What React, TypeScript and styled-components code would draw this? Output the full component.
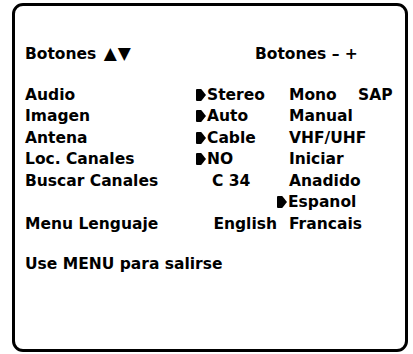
import React from 'react';
import styled, { createGlobalStyle } from 'styled-components';

// one line of the menu: label, then up to 3 value cells
interface Cell {
  text: string;
  selected?: boolean;
  indent?: number;
  alignEnd?: boolean;
}

interface MenuRow {
  label: string;
  cells: (Cell | null)[];
}

const ROWS: MenuRow[] = [
  {
    label: 'Audio',
    cells: [{ text: 'Stereo', selected: true }, { text: 'Mono' }, { text: 'SAP' }],
  },
  { label: 'Imagen', cells: [{ text: 'Auto', selected: true }, { text: 'Manual' }] },
  { label: 'Antena', cells: [{ text: 'Cable', selected: true }, { text: 'VHF/UHF' }] },
  { label: 'Loc. Canales', cells: [{ text: 'NO', selected: true }, { text: 'Iniciar' }] },
  { label: 'Buscar Canales', cells: [{ text: 'C 34', indent: 16 }, { text: 'Anadido' }] },
  { label: '', cells: [null, { text: 'Espanol', selected: true }] },
  {
    label: 'Menu Lenguaje',
    cells: [{ text: 'English', alignEnd: true }, { text: 'Francais' }],
  },
];

const GlobalStyle = createGlobalStyle`
  html, body {
    margin: 0;
    padding: 0;
    background: #fff;
  }
`;

const Marker = () => (
  <MarkerSvg viewBox="0 0 10 12" width="10" height="12">
    <path d="M0 1 Q0 0 1 0 H5.2 L10 6 L5.2 12 H1 Q0 12 0 11 Z" fill="#000" />
  </MarkerSvg>
);

const App = () => {
  return (
    <>
      <GlobalStyle />
      <Screen>
        <MenuGrid>
          <Label>
            Botones <Arrows>▲▼</Arrows>
          </Label>
          <HeaderRight>Botones – +</HeaderRight>
          <Spacer />

          {ROWS.map((row, i) => (
            <React.Fragment key={i}>
              <Label>{row.label}</Label>
              {[0, 1, 2].map((c) => {
                const cell = row.cells[c];
                if (!cell) return <Value key={c} />;
                return (
                  <Value
                    key={c}
                    $hang={c > 0 && !!cell.selected}
                    $indent={cell.indent}
                    $end={cell.alignEnd}
                  >
                    {cell.selected ? <Marker /> : null}
                    {cell.text}
                  </Value>
                );
              })}
            </React.Fragment>
          ))}

          <Spacer />
          <Footer>Use MENU para salirse</Footer>
        </MenuGrid>
      </Screen>
    </>
  );
};

const Screen = styled.div`
  box-sizing: border-box;
  width: 396px;
  height: 349px;
  margin: 3px 0 0 12px;
  padding: 38px 0 0 10px;
  border: 3px solid #000;
  border-radius: 11px;
  background: #fff;
  color: #000;
  font-family: 'DejaVu Sans', 'Liberation Sans', sans-serif;
  font-weight: 700;
  font-size: 15.5px;
  line-height: 21.5px;
`;

const MenuGrid = styled.div`
  display: grid;
  grid-template-columns: 171px 93px 69px 1fr;
  white-space: nowrap;
`;

const Label = styled.div``;

const Arrows = styled.span`
  font-size: 17px;
  line-height: 0;
  letter-spacing: 1px;
  margin-left: 2px;
`;

const HeaderRight = styled.div`
  grid-column: 2 / 5;
  padding-left: 59px;
`;

const Spacer = styled.div`
  grid-column: 1 / -1;
  height: 19px;
`;

const Value = styled.div<{
  $hang?: boolean;
  $indent?: number;
  $end?: boolean;
}>`
  padding-left: ${(p) => (p.$indent ? `${p.$indent}px` : '0')};
  margin-left: ${(p) => (p.$hang ? '-12px' : '0')};
  text-align: ${(p) => (p.$end ? 'right' : 'left')};
  padding-right: ${(p) => (p.$end ? '12px' : '0')};
`;

const MarkerSvg = styled.svg`
  display: inline-block;
  vertical-align: -1px;
  margin-right: 1px;
`;

const Footer = styled.div`
  grid-column: 1 / -1;
`;

export default App;
